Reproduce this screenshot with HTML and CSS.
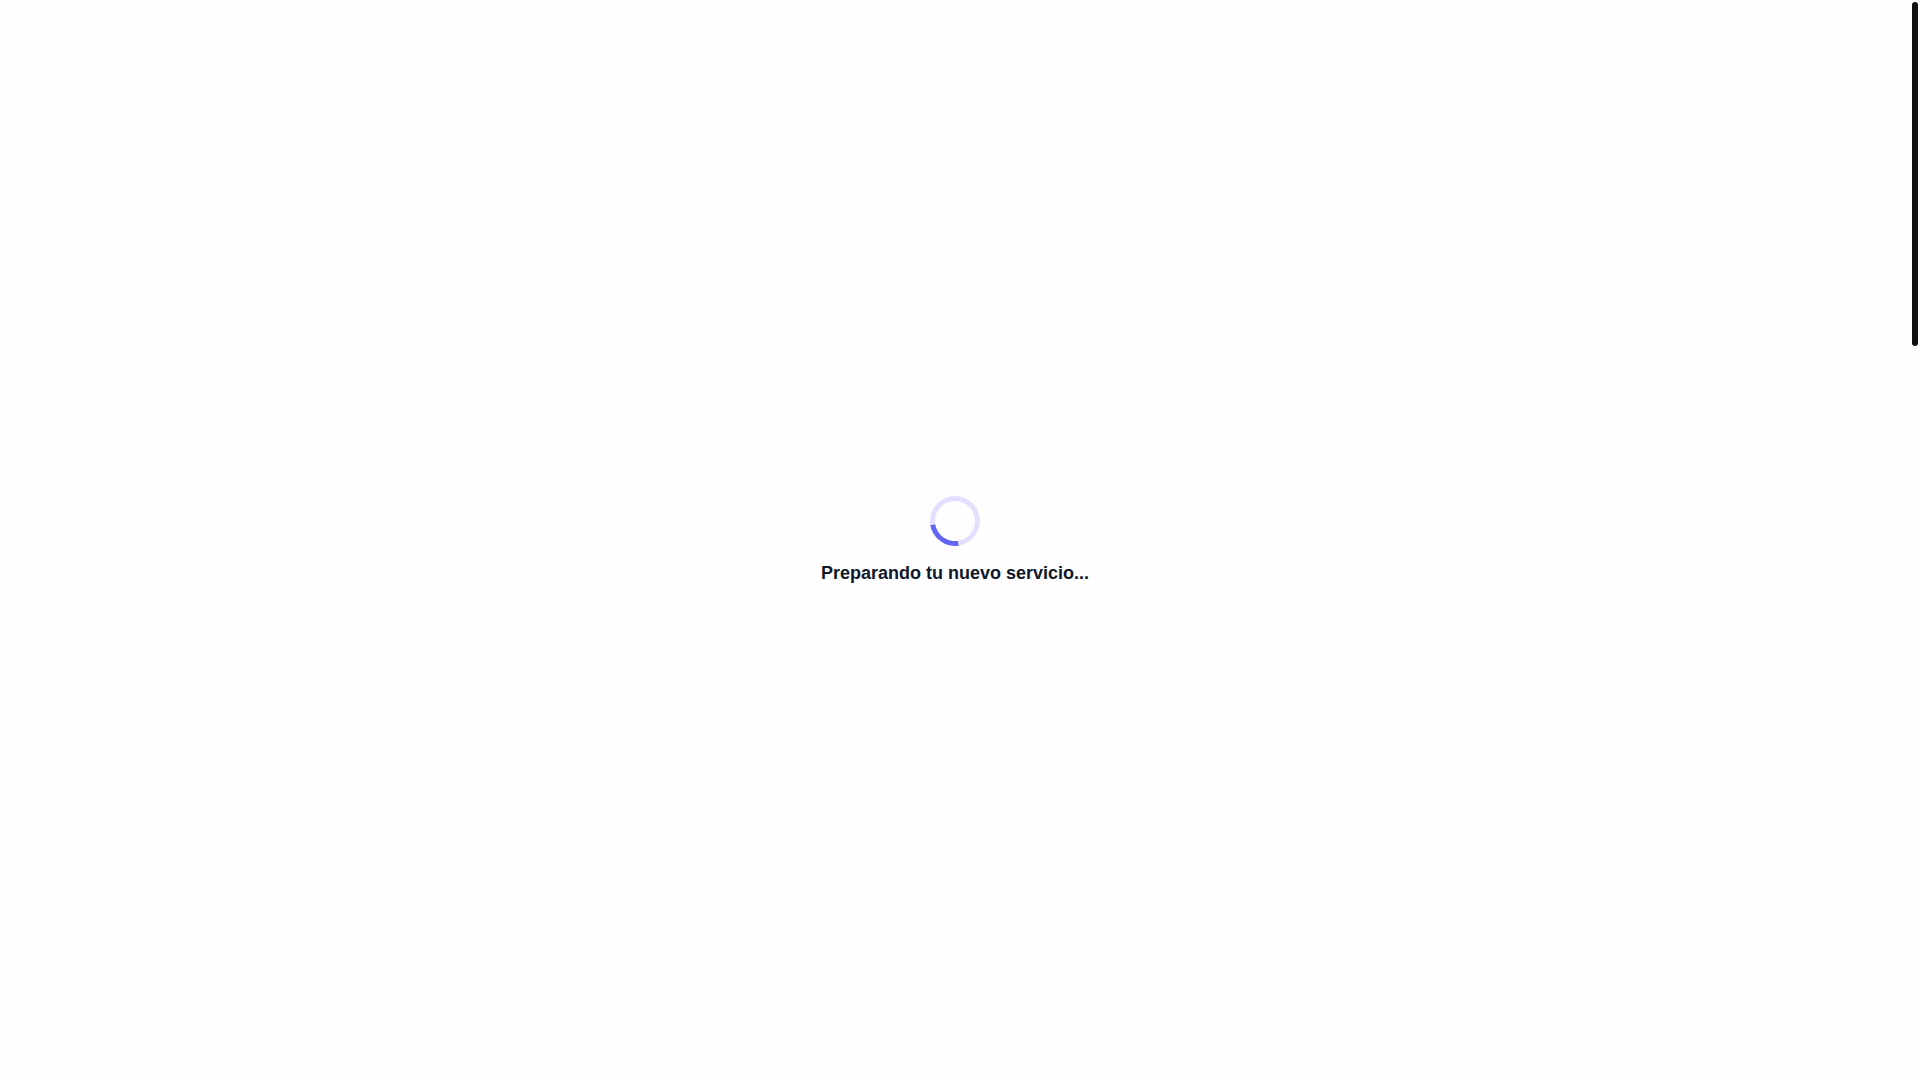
FILE: index.html
```
<!DOCTYPE html>
<html lang="es">
<head>
    <meta charset="UTF-8">
    <meta name="viewport" content="width=device-width, initial-scale=1.0">
    <title>Preparando servicio</title>
    <link rel="stylesheet" href="styles.css">
</head>
<body>
    <main class="loader" role="status">
        <div class="spinner"></div>
        <p class="loader-text">Preparando tu nuevo servicio...</p>
    </main>
    <div class="scroll-track" aria-hidden="true">
        <div class="scroll-thumb"></div>
    </div>
</body>
</html>
```

FILE: styles.css
```
* {
    box-sizing: border-box;
}

body {
    display: flex;
    margin: 0;
    height: 100vh;
    background-color: #fefefe;
    color: #0f172a;
    font-family: "Liberation Sans", Arial, sans-serif;
}

.loader {
    flex: 1;
    display: flex;
    flex-direction: column;
    align-items: center;
    justify-content: center;
    gap: 16px;
}

/* light ring with one coloured quarter */
.spinner {
    width: 50px;
    height: 50px;
    border: 5px solid #e2e0ff;
    border-top-color: #6366f1;
    border-radius: 50%;
    transform: rotate(216deg);
}

.loader-text {
    margin: 0;
    font-size: 18px;
    font-weight: 700;
    line-height: 22px;
}

/* slim page scrollbar */
.scroll-track {
    width: 10px;
    padding: 2px;
}

.scroll-thumb {
    height: 32%;
    background-color: #111;
    border-radius: 3px;
}
```
